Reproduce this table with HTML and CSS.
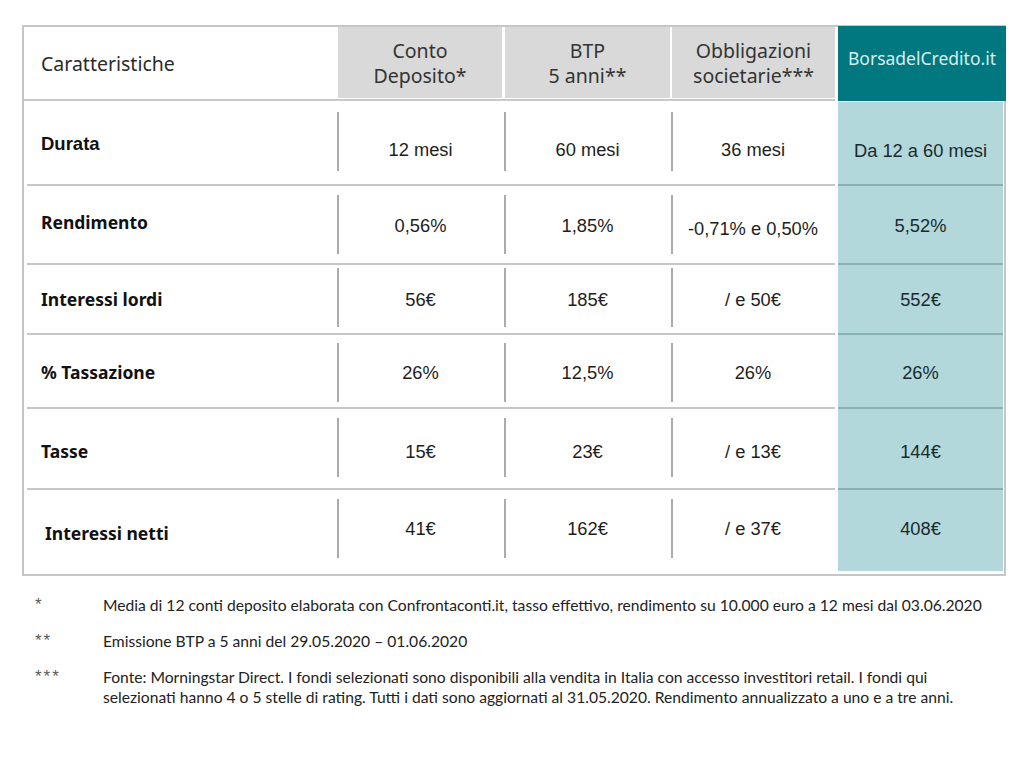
FILE: index.html
```html
<!DOCTYPE html>
<html lang="it">
<head>
<meta charset="utf-8">
<title>Confronto rendimenti</title>
<link rel="stylesheet" href="styles.css">
</head>
<body>
<div class="table">
  <div class="row head">
    <div class="hcell first"><span>Caratteristiche</span></div>
    <div class="hcell c2"><div class="gray">Conto<br>Deposito*</div></div>
    <div class="hcell c3"><div class="gray">BTP<br>5 anni**</div></div>
    <div class="hcell c4"><div class="gray">Obbligazioni<br>societarie***</div></div>
    <div class="hbrand">BorsadelCredito.it</div>
  </div>
  <div class="row r1">
    <div class="label arial">Durata</div>
    <div class="val">12 mesi</div>
    <div class="val">60 mesi</div>
    <div class="val c4">36 mesi</div>
    <div class="val teal">Da 12 a 60 mesi</div>
  </div>
  <div class="row r2">
    <div class="label">Rendimento</div>
    <div class="val">0,56%</div>
    <div class="val">1,85%</div>
    <div class="val c4 low">-0,71% e 0,50%</div>
    <div class="val teal">5,52%</div>
  </div>
  <div class="row r3">
    <div class="label">Interessi lordi</div>
    <div class="val">56€</div>
    <div class="val">185€</div>
    <div class="val c4">/ e 50€</div>
    <div class="val teal">552€</div>
  </div>
  <div class="row r4">
    <div class="label">% Tassazione</div>
    <div class="val">26%</div>
    <div class="val">12,5%</div>
    <div class="val c4">26%</div>
    <div class="val teal">26%</div>
  </div>
  <div class="row r5">
    <div class="label">Tasse</div>
    <div class="val">15€</div>
    <div class="val">23€</div>
    <div class="val c4">/ e 13€</div>
    <div class="val teal">144€</div>
  </div>
  <div class="row r6">
    <div class="label indent">Interessi netti</div>
    <div class="val">41€</div>
    <div class="val">162€</div>
    <div class="val c4">/ e 37€</div>
    <div class="val teal">408€</div>
  </div>
</div>

<div class="notes">
  <div class="mark">*</div>
  <div class="note">Media di 12 conti deposito elaborata con Confrontaconti.it, tasso effettivo, rendimento su 10.000 euro a 12 mesi dal 03.06.2020</div>
  <div class="mark">**</div>
  <div class="note">Emissione BTP a 5 anni del 29.05.2020 – 01.06.2020</div>
  <div class="mark">***</div>
  <div class="note">Fonte: Morningstar Direct. I fondi selezionati sono disponibili alla vendita in Italia con accesso investitori retail. I fondi qui<br>selezionati hanno 4 o 5 stelle di rating. Tutti i dati sono aggiornati al 31.05.2020. Rendimento annualizzato a uno e a tre anni.</div>
</div>
</body>
</html>
```

FILE: styles.css
```css
* { box-sizing: border-box; }

html, body {
  margin: 0;
  padding: 0;
  background: #ffffff;
}

body {
  font-family: "Liberation Sans", Arial, sans-serif;
  color: #1e1e1e;
}

.table {
  width: 984px;
  margin: 25px 0 0 22px;
  border: 2px solid #c6c6c6;
}

.row {
  display: grid;
  grid-template-columns: 313px 167px 167px 167px 166px;
  height: var(--h);
}

/* header */
.head { height: 74px; }

.hcell {
  border-bottom: 2px solid #c8c8c8;
  display: flex;
}

.hcell.first {
  align-items: center;
  padding-left: 17px;
  font-family: "Noto Sans", sans-serif;
  font-size: 19.5px;
  color: #2a2a2a;
}

.hcell .gray {
  flex: 1;
  margin-bottom: 1px;
  background: #d9d9d9;
  display: flex;
  align-items: center;
  justify-content: center;
  text-align: center;
  font-family: "Noto Sans", sans-serif;
  font-size: 19.5px;
  line-height: 25px;
  color: #333333;
}

.hcell.c2 .gray { margin-left: 1px; margin-right: 2px; }
.hcell.c3 .gray { margin-left: 1px; margin-right: 1px; }
.hcell.c4 { margin-right: 3px; }
.hcell.c4 .gray { margin-left: 1px; }

.hbrand {
  background: #017880;
  color: #d6eeee;
  display: flex;
  align-items: center;
  justify-content: center;
  padding-bottom: 12px;
  margin: -1px -2px 0 0;
  font-family: "Noto Sans", sans-serif;
  font-size: 17.5px;
}

/* body rows */
.r1 { --h: 85px; --lt: 32px; --vt: 38px; --line: 11px; }
.r2 { --h: 79px; --lt: 24.5px; --vt: 29px; --line: 9px; }
.r3 { --h: 70px; --lt: 22.5px; --vt: 24px; --line: 3px; }
.r4 { --h: 74px; --lt: 25.5px; --vt: 27px; --line: 8px; }
.r5 { --h: 81px; --lt: 30.5px; --vt: 32px; --line: 9px; }
.r6 { --h: 84px; --lt: 31.5px; --vt: 28px; --line: 9px; }

.label {
  margin-left: 3px;
  padding: var(--lt) 0 0 14px;
  border-bottom: 2px solid #c6c6c6;
  font-family: "Noto Sans", sans-serif;
  font-weight: 700;
  font-size: 17.5px;
  line-height: 22px;
  color: #111111;
}

.label.arial {
  font-family: "Liberation Sans", Arial, sans-serif;
  font-size: 18.5px;
}

.label.indent { padding-left: 18px; }

.val {
  padding-top: var(--vt);
  text-align: center;
  font-size: 18.3px;
  line-height: 22px;
  color: #1e1e1e;
  border-bottom: 2px solid #c6c6c6;
  background: linear-gradient(#ababab, #ababab) no-repeat 0 var(--line) / 2px 59px;
}

.val.c4 { margin-right: 3px; }
.val.low { padding-top: calc(var(--vt) + 3px); }

.val.teal {
  background: #b2d8dc;
  border-bottom-color: #86b1b5;
  margin-right: 1px;
  color: #1a2a2c;
}

.head + .row .teal { margin-top: 1px; }

.r6 > * { border-bottom: none; }
.r6 .teal { margin-bottom: 3px; }

/* footnotes */
.notes {
  display: grid;
  grid-template-columns: 68px auto;
  row-gap: 16px;
  margin: 19px 0 0 35px;
  font-family: Lato, "Liberation Sans", sans-serif;
  font-size: 15.65px;
  line-height: 20px;
  color: #222222;
}

.mark {
  font-family: "Liberation Sans", Arial, sans-serif;
  font-size: 17px;
  color: #5a5a5a;
  letter-spacing: 2px;
}

.note { white-space: nowrap; }
```
